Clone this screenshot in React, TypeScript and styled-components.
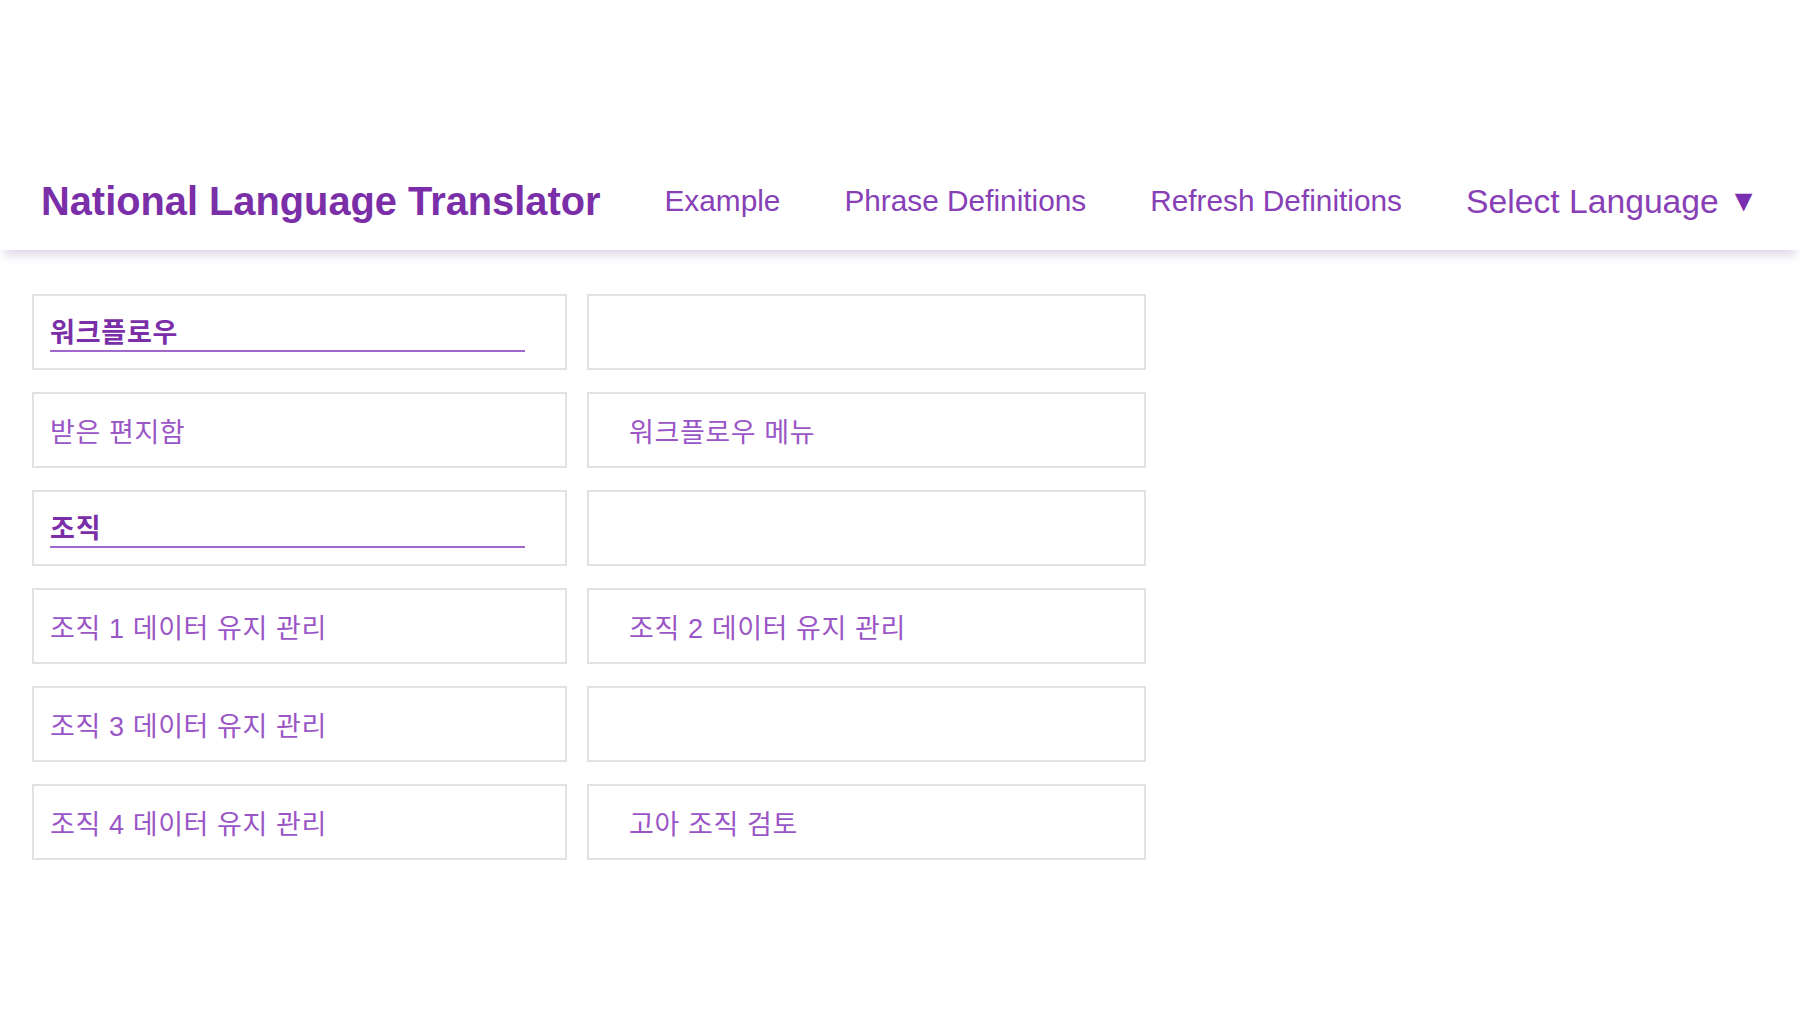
import { FC } from "react";
import styled, { createGlobalStyle } from "styled-components";

const GlobalStyle = createGlobalStyle`
  html, body {
    margin: 0;
    padding: 0;
    background: #ffffff;
  }
  body {
    font-family: "Liberation Sans", Arial, sans-serif;
  }
`;

type Cell = { text?: string; heading?: boolean };

const rows: [Cell, Cell][] = [
  [{ text: "워크플로우", heading: true }, {}],
  [{ text: "받은 편지함" }, { text: "워크플로우 메뉴" }],
  [{ text: "조직", heading: true }, {}],
  [{ text: "조직 1 데이터 유지 관리" }, { text: "조직 2 데이터 유지 관리" }],
  [{ text: "조직 3 데이터 유지 관리" }, {}],
  [{ text: "조직 4 데이터 유지 관리" }, { text: "고아 조직 검토" }],
];

const App: FC = () => {
  return (
    <>
      <GlobalStyle />
      <Page>
        <Header>
          <Brand href="#">National Language Translator</Brand>
          <NavLink href="#">Example</NavLink>
          <NavLink href="#">Phrase Definitions</NavLink>
          <NavLink href="#">Refresh Definitions</NavLink>
          <LangSelect type="button">
            Select Language <Caret>▼</Caret>
          </LangSelect>
        </Header>
        <Grid>
          {rows.map(([left, right], i) => (
            <Row key={i}>
              <Card $side="left">
                {left.text &&
                  (left.heading ? (
                    <Heading>{left.text}</Heading>
                  ) : (
                    <Item>{left.text}</Item>
                  ))}
              </Card>
              <Card $side="right">{right.text && <Item>{right.text}</Item>}</Card>
            </Row>
          ))}
        </Grid>
      </Page>
    </>
  );
};

export default App;

const Page = styled.div`
  min-height: 1013px;
  padding-top: 150px;
  box-sizing: border-box;
`;

const Header = styled.header`
  display: flex;
  align-items: center;
  gap: 64px;
  height: 100px;
  box-sizing: border-box;
  padding: 2px 0 0 41px;
  background: #ffffff;
  box-shadow: 0 9px 10px -4px rgba(110, 70, 140, 0.22);
  position: relative;
`;

const Brand = styled.a`
  font-weight: bold;
  font-size: 39.8px;
  color: #7a2fa8;
  text-decoration: none;
  white-space: nowrap;
`;

const NavLink = styled.a`
  font-size: 29.8px;
  color: #8740b6;
  text-decoration: none;
  white-space: nowrap;
`;

const LangSelect = styled.button`
  border: none;
  background: none;
  padding: 0;
  font-family: "Liberation Sans", Arial, sans-serif;
  font-size: 33.7px;
  color: #8740b6;
  white-space: nowrap;
  cursor: pointer;
  display: flex;
  align-items: center;
`;

const Caret = styled.span`
  font-size: 30px;
  margin-left: 10px;
  color: #7a2fb0;
`;

const Grid = styled.main`
  display: flex;
  flex-direction: column;
  gap: 22px;
  padding: 44px 0 0 32px;
`;

const Row = styled.div`
  display: grid;
  grid-template-columns: 535px 559px;
  gap: 20px;
`;

const Card = styled.div<{ $side: "left" | "right" }>`
  height: 76px;
  box-sizing: border-box;
  border: 2px solid #e2e2e2;
  display: flex;
  align-items: center;
  padding: ${(p) => (p.$side === "left" ? "0 40px 0 16px" : "0 16px 0 40px")};
  font-family: "Liberation Sans", "Noto Sans CJK KR", sans-serif;
`;

const Item = styled.span`
  font-size: 27px;
  letter-spacing: 0.6px;
  color: #9a55c6;
  white-space: nowrap;
`;

const Heading = styled.h2`
  flex: 1;
  margin: 0;
  padding: 5px 0 0;
  font-size: 27px;
  letter-spacing: 0.8px;
  font-weight: bold;
  color: #7a2fa8;
  line-height: 1.25;
  border-bottom: 2px solid #a068cc;
`;
